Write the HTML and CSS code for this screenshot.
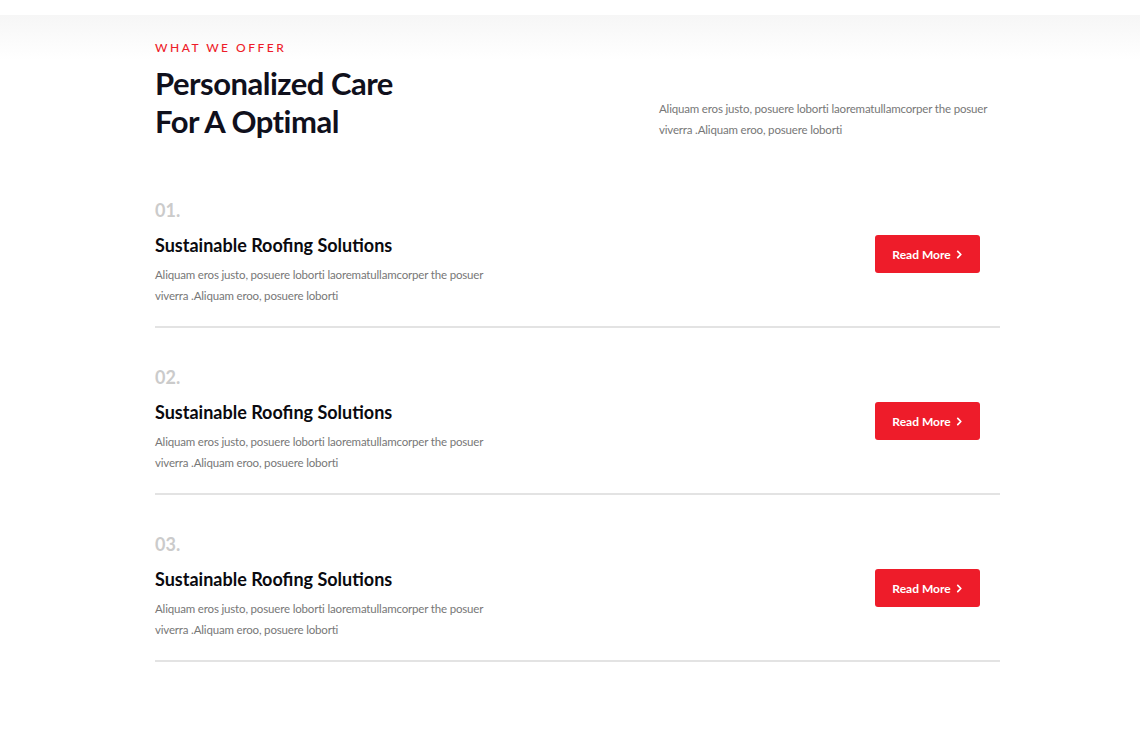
FILE: index.html
```html
<!DOCTYPE html>
<html lang="en">
<head>
<meta charset="utf-8">
<title>What We Offer</title>
<link rel="stylesheet" href="styles.css">
</head>
<body>
<div class="topbar"></div>
<section class="offer">
  <div class="container">
    <header class="offer-head">
      <div class="head-left">
        <p class="eyebrow">WHAT WE OFFER</p>
        <h1 class="title">Personalized Care<br>For A Optimal</h1>
      </div>
      <p class="head-text">Aliquam eros justo, posuere loborti laorematullamcorper the posuer viverra .Aliquam eroo, posuere loborti</p>
    </header>

    <div class="items">
      <article class="item">
        <div class="item-body">
          <div class="num">01.</div>
          <h2 class="item-title">Sustainable Roofing Solutions</h2>
          <p class="item-text">Aliquam eros justo, posuere loborti laorematullamcorper the posuer<br>viverra .Aliquam eroo, posuere loborti</p>
        </div>
        <a class="btn" href="#">Read More <svg class="chev" viewBox="0 0 8 10" width="7" height="9"><path d="M2 1.5l3.5 3.5-3.5 3.5" fill="none" stroke="#fff" stroke-width="2" stroke-linecap="round" stroke-linejoin="round"/></svg></a>
      </article>
      <article class="item">
        <div class="item-body">
          <div class="num">02.</div>
          <h2 class="item-title">Sustainable Roofing Solutions</h2>
          <p class="item-text">Aliquam eros justo, posuere loborti laorematullamcorper the posuer<br>viverra .Aliquam eroo, posuere loborti</p>
        </div>
        <a class="btn" href="#">Read More <svg class="chev" viewBox="0 0 8 10" width="7" height="9"><path d="M2 1.5l3.5 3.5-3.5 3.5" fill="none" stroke="#fff" stroke-width="2" stroke-linecap="round" stroke-linejoin="round"/></svg></a>
      </article>
      <article class="item">
        <div class="item-body">
          <div class="num">03.</div>
          <h2 class="item-title">Sustainable Roofing Solutions</h2>
          <p class="item-text">Aliquam eros justo, posuere loborti laorematullamcorper the posuer<br>viverra .Aliquam eroo, posuere loborti</p>
        </div>
        <a class="btn" href="#">Read More <svg class="chev" viewBox="0 0 8 10" width="7" height="9"><path d="M2 1.5l3.5 3.5-3.5 3.5" fill="none" stroke="#fff" stroke-width="2" stroke-linecap="round" stroke-linejoin="round"/></svg></a>
      </article>
    </div>
  </div>
</section>
</body>
</html>
```
FILE: styles.css
```css
* { box-sizing: border-box; }
html, body { margin: 0; padding: 0; background: #fff; }
body { font-family: "Lato", "Liberation Sans", sans-serif; color: #0f0f1a; }

.topbar { height: 15px; background: #fff; }

.offer {
  background: linear-gradient(#f6f6f6 0, #ffffff 45px, #ffffff 100%);
  padding-top: 25px;
  padding-bottom: 60px;
}
.container { width: 845px; margin-left: 155px; }

.offer-head { display: flex; justify-content: space-between; align-items: flex-start; }
.eyebrow {
  margin: 0;
  color: #ee1c2a;
  font-size: 12px;
  line-height: 16px;
  letter-spacing: 2.5px;
  font-weight: 500;
}
.title {
  margin: 8px 0 0;
  font-size: 31px;
  line-height: 38px;
  font-weight: 700;
  letter-spacing: -0.5px;
  color: #10101c;
}
.head-text {
  margin: 58px 0 0 0;
  width: 341px;
  font-size: 11.5px;
  letter-spacing: -0.17px;
  line-height: 21px;
  color: #777;
}

.items { margin-top: 21px; }
.item {
  display: flex;
  align-items: center;
  justify-content: space-between;
  padding: 37px 20px 20px 0;
  border-bottom: 2px solid #e3e3e3;
}
.num {
  font-size: 18px;
  line-height: 24px;
  font-weight: 700;
  color: #cbcbcb;
}
.item-title {
  margin: 10px 0 0;
  font-size: 18px;
  line-height: 26px;
  font-weight: 700;
  color: #0a0a0f;
}
.item-text {
  margin: 6px 0 0;
  font-size: 11.5px;
  letter-spacing: -0.17px;
  line-height: 21px;
  color: #777;
}
.btn {
  display: flex;
  align-items: center;
  justify-content: center;
  gap: 5px;
  width: 105px;
  height: 38px;
  margin-top: 4px;
  background: #ee1c2a;
  color: #fff;
  text-decoration: none;
  font-size: 12px;
  font-weight: 700;
  border-radius: 3px;
}
.chev { display: block; }
```
